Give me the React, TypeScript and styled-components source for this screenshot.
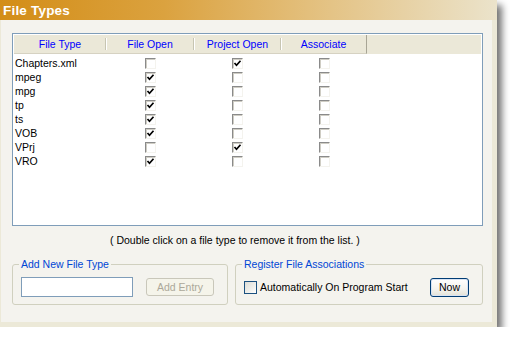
import React from "react";
import styled, { createGlobalStyle } from "styled-components";

const GlobalStyle = createGlobalStyle`
  html, body { margin: 0; padding: 0; background: #ffffff; }
  body { font-family: "Liberation Sans", Arial, sans-serif; font-size: 10.5px; color: #000; }
`;

const COLS = "92px 88px 87px 86px 1fr";

const Frame = styled.div`
  width: 497px;
  height: 327px;
  display: flex;
  flex-direction: column;
  box-sizing: border-box;
  box-shadow: 5px 5px 7px rgba(0, 0, 0, 0.55);
`;

const TitleBar = styled.div`
  height: 20px;
  flex: none;
  display: flex;
  align-items: center;
  padding-left: 3px;
  background: linear-gradient(to right, #d38d17 0%, #dba23f 33%, #e3bf7c 62%, #ebe3cb 100%);
  color: #fff;
  font-weight: bold;
  font-size: 13.5px;
  letter-spacing: 0.2px;
`;

const Body = styled.div`
  flex: 1;
  display: flex;
  flex-direction: column;
  background: #f4f3ee;
  border-left: 1px solid #ece9d8;
  border-right: 5px solid #ece9d8;
  border-bottom: 5px solid #ece9d8;
  padding: 13px 9px 14px 11px;
  min-height: 0;
`;

const ListBox = styled.div`
  height: 193px;
  box-sizing: border-box;
  border: 1px solid #7f9db9;
  background: #fff;
  padding: 1px;
  display: flex;
  flex-direction: column;
`;

const HeaderRow = styled.div`
  display: grid;
  grid-template-columns: ${COLS};
  height: 19px;
  background: #ebe8d8;
`;

const HeaderCell = styled.div<{ $last?: boolean }>`
  position: relative;
  display: flex;
  align-items: center;
  justify-content: center;
  color: #0000ff;
  font-size: 10.5px;
  border-bottom: 1px solid #d6d2c2;
  ${(p) =>
    p.$last
      ? `border-right: 1px solid #a8a595;`
      : `&::after {
      content: "";
      position: absolute;
      right: 0;
      top: 3px;
      bottom: 3px;
      width: 1px;
      background: #c7c5b2;
      box-shadow: 1px 0 0 #fff;
    }`}
`;

const HeaderFill = styled.div``;

const Rows = styled.div`
  margin-top: 2px;
  display: flex;
  flex-direction: column;
`;

const Row = styled.div`
  display: grid;
  grid-template-columns: ${COLS};
  height: 14px;
  align-items: center;
`;

const NameCell = styled.div`
  padding-left: 1px;
  font-size: 10.5px;
  line-height: 14px;
  white-space: nowrap;
`;

const BoxCell = styled.div`
  display: flex;
  justify-content: center;
  align-items: center;
  height: 14px;
`;

const ListCheck = styled.div`
  width: 11px;
  height: 11px;
  box-sizing: border-box;
  border-top: 1px solid #8a8a8a;
  border-left: 1px solid #8a8a8a;
  border-right: 1px solid #f4f3ee;
  border-bottom: 1px solid #f4f3ee;
  box-shadow: inset 1px 1px 0 #cfcdc4;
  background: #fff;
  display: flex;
  align-items: center;
  justify-content: center;
`;

const Hint = styled.div`
  margin-top: 8px;
  height: 13px;
  line-height: 13px;
  padding-left: 98px;
  font-size: 10.5px;
  white-space: nowrap;
`;

const GroupRow = styled.div`
  margin-top: 11px;
  display: flex;
  gap: 7px;
`;

const Group = styled.fieldset<{ $w: number }>`
  width: ${(p) => p.$w}px;
  box-sizing: border-box;
  margin: 0;
  border: 1px solid #d0d0bf;
  border-radius: 3px;
  padding: 6px 6px 7px 6px;
  min-width: 0;
`;

const Legend = styled.legend`
  padding: 0 2px;
  color: #0046d5;
  font-size: 10.5px;
  line-height: 13px;
`;

const GroupContent = styled.div`
  display: flex;
  align-items: center;
  padding-left: 2px;
  height: 20px;
`;

const TextInput = styled.input`
  width: 112px;
  height: 20px;
  box-sizing: border-box;
  border: 1px solid #7f9db9;
  background: #fff;
  padding: 0 3px;
  margin: 0;
  font: inherit;
  outline: none;
`;

const Button = styled.button<{ $disabled?: boolean }>`
  height: ${(p) => (p.$disabled ? 18 : 19)}px;
  box-sizing: border-box;
  padding: 0;
  margin: 0;
  font-family: "Liberation Sans", Arial, sans-serif;
  font-size: 10.5px;
  border-radius: 3px;
  border: 1px solid ${(p) => (p.$disabled ? "#c9c7ba" : "#003c74")};
  color: ${(p) => (p.$disabled ? "#aca899" : "#000")};
  background: ${(p) =>
    p.$disabled ? "#f5f4ea" : "linear-gradient(to bottom, #ffffff 0%, #f4f3ee 60%, #e3e1d6 100%)"};
  box-shadow: ${(p) => (p.$disabled ? "none" : "inset 0 0 0 1px #d8e3f3")};
`;

const AddButton = styled(Button)`
  width: 68px;
  margin-left: 13px;
`;

const NowButton = styled(Button)`
  width: 39px;
  margin-left: auto;
  margin-right: 7px;
`;

const XpCheck = styled.div`
  width: 13px;
  height: 13px;
  box-sizing: border-box;
  border: 1px solid #1c5180;
  background: linear-gradient(135deg, #dcdcd7 0%, #f0f0ec 60%, #ffffff 100%);
  flex: none;
`;

const CheckLabel = styled.span`
  margin-left: 3px;
  font-size: 10.5px;
  white-space: nowrap;
`;

const CheckMark = () => (
  <svg width="9" height="9" viewBox="0 0 9 9">
    <polyline points="1.5,4 3.5,6.2 7.5,1.8" fill="none" stroke="#000" strokeWidth="1.7" />
  </svg>
);

const Box = ({ on }: { on: boolean }) => (
  <BoxCell>
    <ListCheck>{on ? <CheckMark /> : null}</ListCheck>
  </BoxCell>
);

const data: [string, boolean, boolean, boolean][] = [
  ["Chapters.xml", false, true, false],
  ["mpeg", true, false, false],
  ["mpg", true, false, false],
  ["tp", true, false, false],
  ["ts", true, false, false],
  ["VOB", true, false, false],
  ["VPrj", false, true, false],
  ["VRO", true, false, false],
];

export default function App() {
  return (
    <>
      <GlobalStyle />
      <Frame>
        <TitleBar>File Types</TitleBar>
        <Body>
          <ListBox>
            <HeaderRow>
              <HeaderCell>File Type</HeaderCell>
              <HeaderCell>File Open</HeaderCell>
              <HeaderCell>Project Open</HeaderCell>
              <HeaderCell $last>Associate</HeaderCell>
              <HeaderFill />
            </HeaderRow>
            <Rows>
              {data.map(([name, a, b, c]) => (
                <Row key={name}>
                  <NameCell>{name}</NameCell>
                  <Box on={a} />
                  <Box on={b} />
                  <Box on={c} />
                  <div />
                </Row>
              ))}
            </Rows>
          </ListBox>
          <Hint>( Double click on a file type to remove it from the list. )</Hint>
          <GroupRow>
            <Group $w={216}>
              <Legend>Add New File Type</Legend>
              <GroupContent>
                <TextInput />
                <AddButton $disabled disabled>
                  Add Entry
                </AddButton>
              </GroupContent>
            </Group>
            <Group $w={248}>
              <Legend>Register File Associations</Legend>
              <GroupContent>
                <XpCheck />
                <CheckLabel>Automatically On Program Start</CheckLabel>
                <NowButton>Now</NowButton>
              </GroupContent>
            </Group>
          </GroupRow>
        </Body>
      </Frame>
    </>
  );
}
